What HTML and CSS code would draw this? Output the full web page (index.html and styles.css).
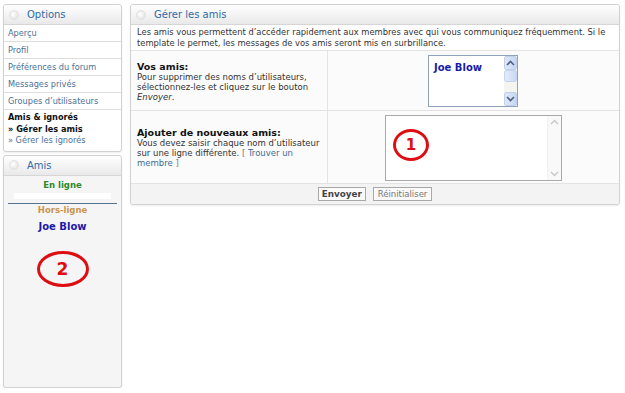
FILE: index.html
```html
<!DOCTYPE html>
<html lang="fr">
<head>
    <meta charset="UTF-8">
    <title>Gérer les amis</title>
    <link rel="stylesheet" href="styles.css">
</head>
<body>
    <div class="page">
        <div class="sidebar">
            <div class="panel options">
                <div class="panel-head"><span class="dot"></span>Options</div>
                <ul class="nav">
                    <li><a href="#">Aperçu</a></li>
                    <li><a href="#">Profil</a></li>
                    <li><a href="#">Préférences du forum</a></li>
                    <li><a href="#">Messages privés</a></li>
                    <li><a href="#">Groupes d’utilisateurs</a></li>
                    <li class="nav-section">
                        <strong>Amis &amp; ignorés</strong>
                        <span class="sub current">» Gérer les amis</span>
                        <a class="sub" href="#">» Gérer les ignorés</a>
                    </li>
                </ul>
            </div>

            <div class="panel friends">
                <div class="panel-head"><span class="dot"></span>Amis</div>
                <div class="friends-body">
                    <div class="online">En ligne</div>
                    <div class="online-list"></div>
                    <div class="offline">Hors-ligne</div>
                    <div class="friend-name">Joe Blow</div>
                    <div class="mark mark-two">2</div>
                </div>
            </div>
        </div>

        <div class="panel main">
            <div class="panel-head"><span class="dot"></span>Gérer les amis</div>
            <p class="intro">Les amis vous permettent d’accéder rapidement aux membres avec qui vous communiquez fréquemment. Si le template le permet, les messages de vos amis seront mis en surbrillance.</p>

            <div class="row row-friends">
                <div class="label-cell">
                    <b>Vos amis:</b>
                    Pour supprimer des noms d’utilisateurs, sélectionnez-les et cliquez sur le bouton <em>Envoyer</em>.
                </div>
                <div class="field-cell">
                    <div class="listbox">
                        <div class="listbox-items">Joe Blow</div>
                        <div class="scroll xp">
                            <span class="arrow">
                                <svg width="9" height="6" viewBox="0 0 9 6"><path d="M1 5 L4.5 1.5 L8 5" fill="none" stroke="#4d6185" stroke-width="1.6"/></svg>
                            </span>
                            <span class="thumb"></span>
                            <span class="track"></span>
                            <span class="arrow">
                                <svg width="9" height="6" viewBox="0 0 9 6"><path d="M1 1 L4.5 4.5 L8 1" fill="none" stroke="#4d6185" stroke-width="1.6"/></svg>
                            </span>
                        </div>
                    </div>
                </div>
            </div>

            <div class="row row-add">
                <div class="label-cell">
                    <b>Ajouter de nouveaux amis:</b>
                    Vous devez saisir chaque nom d’utilisateur sur une ligne différente. <span class="bracket">[</span> <a href="#">Trouver un membre</a> <span class="bracket">]</span>
                </div>
                <div class="field-cell">
                    <div class="textbox">
                        <div class="mark mark-one">1</div>
                        <div class="scroll plain">
                            <span class="arrow">
                                <svg width="9" height="6" viewBox="0 0 9 6"><path d="M1 5 L4.5 1.5 L8 5" fill="none" stroke="#c8c8c8" stroke-width="1.4"/></svg>
                            </span>
                            <span class="track"></span>
                            <span class="arrow">
                                <svg width="9" height="6" viewBox="0 0 9 6"><path d="M1 1 L4.5 4.5 L8 1" fill="none" stroke="#c8c8c8" stroke-width="1.4"/></svg>
                            </span>
                        </div>
                    </div>
                </div>
            </div>

            <div class="actions">
                <button class="btn btn-main">Envoyer</button>
                <button class="btn">Réinitialiser</button>
            </div>
        </div>
    </div>
</body>
</html>
```

FILE: styles.css
```css
body {
    margin: 0;
    background-color: #ffffff;
    font-family: "DejaVu Sans", Verdana, sans-serif;
    font-size: 8.5px;
    color: #333;
}
a {
    color: #3f6b96;
    text-decoration: none;
}
.page {
    display: flex;
    align-items: flex-start;
    gap: 8px;
    padding: 4px 4px 0 3px;
}
.sidebar {
    width: 119px;
    display: flex;
    flex-direction: column;
    gap: 3px;
}
.panel {
    background-color: #fff;
    border: 1px solid #d2d2d2;
    border-radius: 3px;
    box-shadow: 0 1px 2px rgba(0,0,0,0.08);
}
.panel-head {
    display: flex;
    align-items: center;
    height: 19px;
    padding-left: 5px;
    background: linear-gradient(#ffffff, #e9e9e9);
    border-bottom: 1px solid #d6d6d6;
    font-family: "DejaVu Sans", sans-serif;
    font-size: 10px;
    color: #2f6aa8;
    border-radius: 3px 3px 0 0;
}
.dot {
    width: 8px;
    height: 8px;
    border-radius: 50%;
    background: radial-gradient(circle at 40% 40%, #ffffff, #dcdcdc);
    border: 1px solid #e2e2e2;
    margin-right: 8px;
}

/* left menu */
.sidebar .panel {
    font-size: 8.2px;
}
.nav {
    list-style: none;
    margin: 0;
    padding: 0;
}
.nav li {
    height: 16px;
    line-height: 16px;
    padding-left: 4px;
    border-bottom: 1px solid #dedede;
    color: #3f6b96;
}
.nav li a {
    color: #4a7198;
}
.nav .nav-section {
    height: auto;
    line-height: 11.5px;
    padding: 2px 4px 4px;
    border-bottom: none;
    display: flex;
    flex-direction: column;
}
.nav-section strong {
    color: #111;
}
.nav-section .current {
    color: #111;
    font-weight: bold;
}

/* friends sidebar */
.friends {
    background-color: #f5f5f5;
}
.friends-body {
    height: 211px;
    padding-top: 4px;
    box-sizing: border-box;
    text-align: center;
    font-weight: bold;
}
.online {
    color: #2d8a2d;
    font-size: 8.5px;
    line-height: 11px;
}
.online-list {
    height: 6px;
    margin: 2px 10px 4px;
    background: #ffffff;
}
.offline {
    color: #c9964e;
    font-size: 8.5px;
    line-height: 11px;
    border-top: 1px solid #56728e;
    margin: 0 4px;
    padding-top: 1px;
}
.friend-name {
    color: #1a1aa6;
    font-size: 10px;
    line-height: 12px;
    margin-top: 5px;
}
.mark {
    color: #dd0e12;
    font-family: "DejaVu Sans", sans-serif;
    font-weight: bold;
    border: 3px solid #dd0e12;
    border-radius: 50%;
    display: flex;
    align-items: center;
    justify-content: center;
}
.mark-two {
    width: 46px;
    height: 30px;
    margin: 18px auto 0;
    font-size: 17px;
}

/* main panel */
.main {
    width: 488px;
}
.intro {
    margin: 0;
    padding: 2px 1px 1px 6px;
    font-size: 8.35px;
    line-height: 11px;
    border-bottom: 1px solid #e3e3e3;
}
.row {
    display: flex;
    border-bottom: 1px solid #e3e3e3;
    background-color: #fbfbfb;
}
.label-cell {
    width: 190px;
    padding: 0 0 0 6px;
    border-right: 1px solid #e3e3e3;
    line-height: 10px;
}
.label-cell b {
    display: block;
    color: #111;
    font-size: 9.5px;
    line-height: 10px;
}
.label-cell .bracket {
    color: #777;
}
.row-friends {
    height: 59px;
}
.row-friends .label-cell {
    padding-top: 11px;
}
.row-add {
    height: 72px;
}
.row-add .label-cell {
    padding-top: 17px;
}
.field-cell {
    flex: 1;
    display: flex;
    justify-content: center;
}
.listbox {
    width: 88px;
    height: 50px;
    margin-top: 4px;
    margin-left: -1px;
    border: 1px solid #8ea2bb;
    background: #fff;
    display: flex;
}
.listbox-items {
    flex: 1;
    padding: 6px 0 0 5px;
    color: #1a1aa6;
    font-weight: bold;
    font-size: 10px;
}
.scroll {
    width: 13px;
    display: flex;
    flex-direction: column;
}
.scroll .arrow {
    height: 12px;
    display: flex;
    align-items: center;
    justify-content: center;
}
.scroll .track {
    flex: 1;
}
.xp .arrow {
    background: linear-gradient(90deg, #dfe8f7, #c6d6f2);
    border: 1px solid #c0cfec;
    border-radius: 2px;
}
.xp .thumb {
    height: 10px;
    background: linear-gradient(90deg, #e2ebfa, #cad9f3);
    border: 1px solid #c6d4ee;
    border-radius: 2px;
}
.xp .track {
    background: #f4f5ef;
}
.textbox {
    width: 175px;
    height: 64px;
    margin-top: 4px;
    border: 1px solid #a9a9a9;
    background: #fff;
    display: flex;
    justify-content: space-between;
}
.plain {
    background: #f9f9f9;
    border-left: 1px solid #f0f0f0;
}
.mark-one {
    width: 30px;
    height: 26px;
    margin: 13px 0 0 7px;
    font-size: 15px;
}
.actions {
    height: 20px;
    display: flex;
    align-items: center;
    justify-content: center;
    gap: 7px;
    background: #f3f3f3;
    border-radius: 0 0 3px 3px;
}
.btn {
    font-family: "DejaVu Sans", Verdana, sans-serif;
    font-size: 8.5px;
    height: 14px;
    padding: 0 4px;
    line-height: 12px;
    border: 1px solid #a8a8a8;
    background: #fafafa;
    color: #777;
}
.btn-main {
    font-weight: bold;
    color: #444;
    font-size: 8.8px;
    padding: 0 3px;
}
```
